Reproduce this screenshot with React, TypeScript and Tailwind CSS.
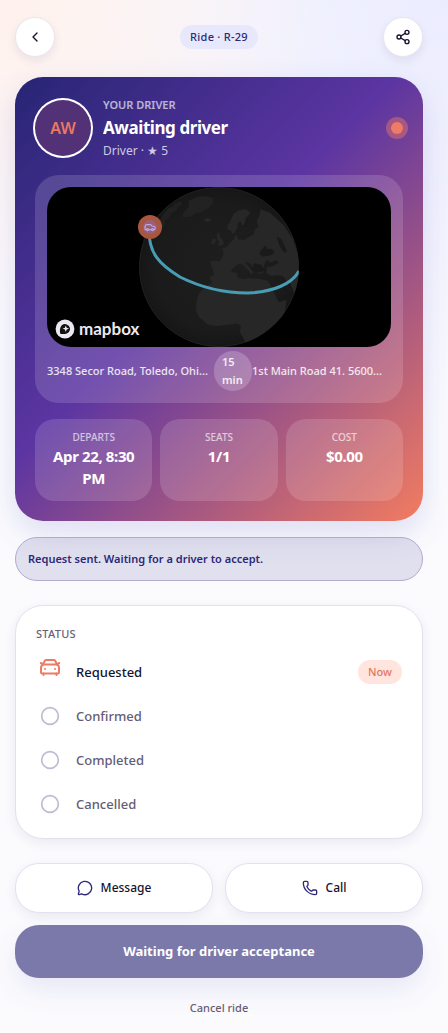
import { Car, ChevronLeft, Circle, MessageCircle, Phone, Share2 } from 'lucide-react';

type StatProps = {
	label: string;
	value: string;
};

const stats: StatProps[] = [
	{ label: 'Departs', value: 'Apr 22, 8:30 PM' },
	{ label: 'Seats', value: '1/1' },
	{ label: 'Cost', value: '$0.00' },
];

const steps = ['Requested', 'Confirmed', 'Completed', 'Cancelled'];

function Stat({ label, value }: StatProps) {
	return (
		<div className="flex flex-col items-center rounded-[20px] bg-white/14 px-3 pt-2.5 pb-3 text-center">
			<dt className="text-[10px] leading-4 font-medium uppercase text-white/65">{label}</dt>
			<dd className="text-[15px] leading-[22px] font-bold tracking-tight text-white">{value}</dd>
		</div>
	);
}

function CarIcon() {
	return (
		<svg
			viewBox="0 0 24 24"
			className="mb-2.5 size-6 text-[#ee7b65]"
			fill="none"
			stroke="currentColor"
			strokeWidth="2"
			strokeLinecap="round"
			strokeLinejoin="round"
			aria-hidden="true">
			<path d="M5 9.500L6.800 5.800Q7.300 5 8.300 5H15.700Q16.700 5 17.200 5.800L19 9.500" />
			<path d="M5 9.500H19Q21 10.500 21 12.500V17.500Q21 18.500 20 18.500H4Q3 18.500 3 17.500V12.500Q3 10.500 5 9.500Z" />
			<path d="M2.800 8L4.500 8.800M21.200 8L19.500 8.800M5.500 18.500V20M18.500 18.500V20" />
			<path d="M7 14h.01M17 14h.01" />
		</svg>
	);
}

function Globe() {
	return (
		<svg
			viewBox="0 0 344 160"
			preserveAspectRatio="xMidYMid slice"
			className="h-full w-full"
			role="img"
			aria-label="Route map">
			<defs>
				<radialGradient id="sphere" cx="50%" cy="50%" r="50%">
					<stop offset="0" stopColor="#1e1e1e" />
					<stop offset="0.8" stopColor="#1b1b1b" />
					<stop offset="1" stopColor="#161616" />
				</radialGradient>
				<clipPath id="globe">
					<circle cx="172" cy="80" r="80" />
				</clipPath>
			</defs>
			<circle cx="172" cy="80" r="79.5" fill="url(#sphere)" stroke="#2b2b2b" strokeWidth="0.7" />
			<g clipPath="url(#globe)">
				<g transform="translate(83 -7) scale(0.3333)" fill="#272727">
					{/* north america and greenland */}
					<path fill="#202020" d="M98 106l18-22 12-4 8-10 16-6 6 8-14 10-8 12-14 8-4 12-12 6-2 14-10 18-8 6-4-22z" />
					<path fill="#222222" d="M176 62l22-10 30-3 22 6-2 16-14 14-16 10-20 5-16 10-22 2-2-10 10-12 8-8z" />
					<path d="M222 118l8-4 12 2 1 6-9 4-10-2z" />
					{/* british isles */}
					<path d="M260 160l8-2 2 12 8 10 4 10-6 6-14 2 6-10-6-8z M246 178l10-4 2 10-6 8-8 0z" />
					{/* scandinavia */}
					<path d="M292 138l10-16 8-20 14-10 22-4 14 8-6 12 4 12-10 12-12 4-4-12-8 4-2 16-8 14-8 4-4-12-8 0z" />
					{/* europe and asia */}
					<path d="M240 244l24-2 6 2 10-20 0-10-6-6 16-8 12-14 10-8 4-12 6 0 2 12 18 2 16-10 14-8 2-14 12-6-6-20 8-14 4-20 28 10 40 36 28 42 16 46 8 60-4 60-10 10-18-44-6 0-16-20-14-2-22 2-12-8 0-18 20-4 16-10-8-8-14 8-14-8-8 16-2 22-14 4-14-10-8-18-10-8-10 0 14 16 12 14-6 8-8-12-18-18-8-4-14 8-10 10-6 18-10 12-14 6-18-6z" />
					{/* africa */}
					<path d="M238 292l18-10 26-2 30-4 10 4 0 12 18 6 20-4 34 4 20 4 12 24 20 40 24-6-6 40-24 50-40 56-48-6-14-30-8-12 2-20-10-8-24 4-38 4-26-4-26-22-10-20 2-30 8-22 18-20 22-12z" />
					{/* inland seas */}
					<path fill="#1a1a1a" d="M392 212l14-16 6 12 14-2 8 12-12 8-24 4-10-8z M440 170l14 6 10 22 8 16-10 4-14-22z M440 288l14 12 16 14 18 18-8 4-20-18-20-16z M372 250l22 4 10 18-22 6-18-8z M350 108l8 8-6 20-12 6 4-14z" />
				</g>
				<path
					d="M102 40C101 66 112 77 133 90C151 99 176 106 201 106C226 105 245 97 252 84"
					fill="none"
					stroke="#479db3"
					strokeWidth="3"
				/>
			</g>
		</svg>
	);
}

function MapPreview() {
	return (
		<div className="relative h-40 overflow-hidden rounded-3xl bg-black">
			<Globe />
			<span className="absolute top-7 left-1/2 -ml-[81px] flex size-6 items-center justify-center rounded-full bg-[#a9563f]">
				<span className="flex size-3.5 items-center justify-center rounded-full bg-[#9b5f78]">
					<Car className="size-3 text-[#bba6e6]" strokeWidth={2.5} aria-hidden="true" />
				</span>
			</span>
			<div className="absolute bottom-2 left-2 flex items-center gap-1 text-[#ece8f0]">
				<svg viewBox="0 0 20 20" className="size-5" aria-hidden="true">
					<circle cx="10" cy="10" r="9.4" fill="currentColor" />
					<path d="M5.200 14.800C4.600 11.500 4.900 8.200 6.800 6.300A4.900 4.900 0 0 1 13.700 13.200C11.800 15.100 8.500 15.400 5.200 14.800Z" fill="#111" />
					<path d="M10.800 6.400l.9 2.400 2.400.9-2.400.9-.9 2.400-.9-2.400-2.400-.9 2.400-.9z" fill="currentColor" />
				</svg>
				<span className="font-[Lato,sans-serif] text-[17px] leading-5 font-bold">mapbox</span>
			</div>
		</div>
	);
}

function DriverCard() {
	return (
		<section className="mt-5 rounded-[28px] bg-[linear-gradient(135deg,#272574_0%,#5c35a2_45%,#f27c60_100%)] p-5 shadow-[0_12px_32px_rgba(60,60,180,0.16)]">
			<div className="flex h-[62px] items-center gap-3">
				<div className="flex size-14 shrink-0 items-center justify-center rounded-full bg-[#523176] text-base font-semibold text-[#e87964] ring-2 ring-white">
					AW
				</div>
				<div className="min-w-0 flex-1">
					<p className="text-[11px] leading-4 font-semibold text-white/65 uppercase">Your driver</p>
					<h1 className="truncate text-[17px] leading-[30px] font-bold tracking-tight text-white">Awaiting driver</h1>
					<p className="text-xs leading-4 text-white/75">Driver · ★ 5</p>
				</div>
				<span className="size-3 rounded-full bg-[#ee7b65] ring-5 ring-[#ee7b65]/45" />
			</div>

			<div className="mt-4 rounded-3xl bg-white/14 p-3">
				<MapPreview />
				<div className="mt-1 flex items-center text-[11px] leading-[18px] font-medium text-white/85">
					<span className="min-w-0 flex-[167] whitespace-nowrap">3348 Secor Road, Toledo, Ohi...</span>
					<span className="w-[38px] shrink-0 rounded-full bg-white/20 px-2 py-0.5 font-semibold">
						15 min
					</span>
					<span className="min-w-0 flex-[139] whitespace-nowrap">1st Main Road 41. 5600...</span>
				</div>
			</div>

			<dl className="mt-4 grid grid-cols-3 gap-2">
				{stats.map((stat) => (
					<Stat key={stat.label} {...stat} />
				))}
			</dl>
		</section>
	);
}

function StatusCard() {
	return (
		<section className="mt-6 rounded-[28px] border border-[#e3e1ee] bg-white px-5 pt-5 pb-3 shadow-[0_4px_12px_rgba(40,30,90,0.08)]">
			<h2 className="text-[11px] leading-4 font-medium tracking-wide text-[#6a6078] uppercase">Status</h2>
			<ol className="mt-2">
				{steps.map((step, index) => (
					<li key={step} className="flex h-11 items-center gap-3">
						<span className="flex w-7 justify-center">
							{index === 0 ? (
								<CarIcon />
							) : (
								<Circle className="size-5 text-[#c1bad3]" aria-hidden="true" />
							)}
						</span>
						<span
							className={
								index === 0
									? 'flex-1 pt-0.5 text-[13px] font-medium text-[#15122b]'
									: 'flex-1 pt-0.5 text-[13px] font-medium text-[#665c74]'
							}>
							{step}
						</span>
						{index === 0 && (
							<span className="rounded-full bg-[#ffe5dd] px-2.5 text-[11px] leading-6 font-medium text-[#e2775f]">
								Now
							</span>
						)}
					</li>
				))}
			</ol>
		</section>
	);
}

export default function App() {
	return (
		<main className="min-h-screen bg-[#fbfbfe] bg-[radial-gradient(circle_at_0%_0%,#fff1ec_0%,transparent_320px),radial-gradient(circle_at_100%_0%,#ebecfe_0%,transparent_420px)] pt-[17px] pr-[25px] pb-3.5 pl-[15px] font-['Noto_Sans','Open_Sans',sans-serif]">
			<header className="flex items-center justify-between">
				<button
					aria-label="Back"
					className="flex size-10 items-center justify-center rounded-full border border-[#e8e6f2] bg-white text-[#15122b] shadow-[0_4px_10px_rgba(40,30,90,0.08)]">
					<ChevronLeft className="size-4" />
				</button>
				<span className="rounded-full bg-[#e7e8fb] px-2.5 text-[11px] leading-6 font-medium tracking-wide text-[#2d2878]">
					Ride · R-29
				</span>
				<button
					aria-label="Share"
					className="flex size-10 items-center justify-center rounded-full border border-[#e8e6f2] bg-white text-[#15122b] shadow-[0_4px_10px_rgba(40,30,90,0.08)]">
					<Share2 className="size-4" />
				</button>
			</header>

			<DriverCard />

			<p
				role="status"
				className="mt-4 rounded-full border border-[#b1abd0] bg-[#29257a]/12 px-3 py-3 text-[11px] leading-[18px] font-semibold text-[#2c2878]">
				Request sent. Waiting for a driver to accept.
			</p>

			<StatusCard />

			<div className="mt-6 grid grid-cols-2 gap-3">
				<button className="flex h-[50px] items-center justify-center gap-2 rounded-3xl border border-[#e3e1ee] bg-white text-xs font-medium text-[#15122b] shadow-[0_4px_12px_rgba(40,30,90,0.08)]">
					<MessageCircle className="size-4 text-[#2d2878]" />
					Message
				</button>
				<button className="flex h-[50px] items-center justify-center gap-2 rounded-3xl border border-[#e3e1ee] bg-white text-xs font-medium text-[#15122b] shadow-[0_4px_12px_rgba(40,30,90,0.08)]">
					<Phone className="size-4 text-[#2d2878]" />
					Call
				</button>
			</div>
			<button
				disabled
				className="mt-3 h-[53px] w-full rounded-3xl bg-[#7b79aa] text-[13px] font-bold text-white shadow-[0_12px_28px_rgba(60,60,180,0.1)]">
				Waiting for driver acceptance
			</button>
			<button className="mt-4 block h-7 w-full text-[11px] font-medium text-[#665c74]">Cancel ride</button>
		</main>
	);
}
